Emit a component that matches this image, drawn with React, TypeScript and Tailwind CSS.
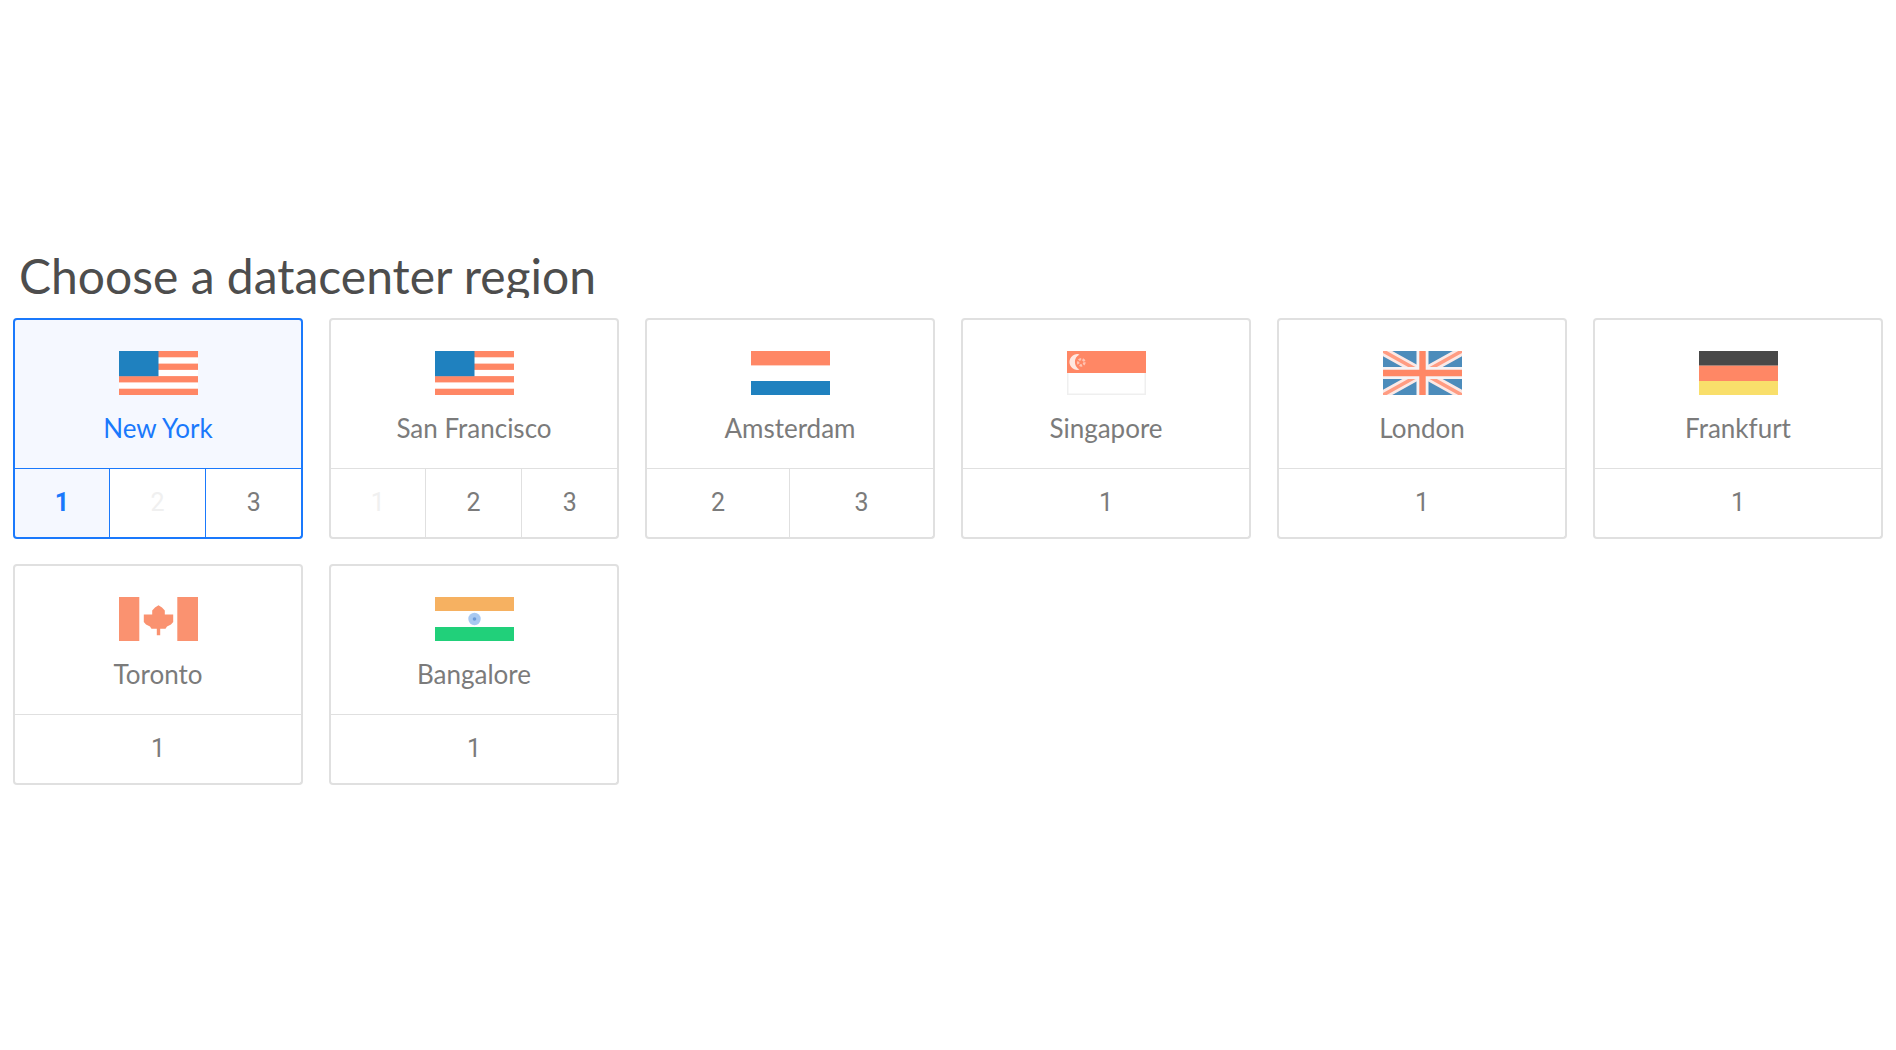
import { useState } from "react";

const CORAL = "#ff8765";
const BLUE = "#1f81bf";

function UsaFlag() {
  return (
    <svg viewBox="0 0 79 44" className="h-11 w-[79px]">
      <rect width="79" height="44" fill="#fff" />
      {[0, 12.6, 25.1, 37.7].map((y) => (
        <rect key={y} y={y} width="79" height="6.3" fill={CORAL} />
      ))}
      <rect width="39.5" height="25.2" fill={BLUE} />
    </svg>
  );
}

function NetherlandsFlag() {
  return (
    <svg viewBox="0 0 79 44" className="h-11 w-[79px]">
      <rect width="79" height="44" fill="#fff" />
      <rect width="79" height="14.4" fill={CORAL} />
      <rect y="30" width="79" height="14" fill={BLUE} />
    </svg>
  );
}

function SingaporeFlag() {
  return (
    <svg viewBox="0 0 79 44" className="h-11 w-[79px]">
      <rect x="0.75" y="0.75" width="77.5" height="42.5" fill="#fff" stroke="#efefef" strokeWidth="1.5" />
      <rect width="79" height="22" fill={CORAL} />
      <path d="M12.5 3.4A7.9 7.9 0 1 0 12.5 18.6A8.6 8.6 0 0 1 12.5 3.4Z" fill="#fff" fillOpacity="0.8" />
      <circle cx="14.3" cy="11.3" r="3.2" fill="none" stroke="#fff" strokeOpacity="0.5" strokeWidth="2.4" strokeDasharray="2.6 1.4" />
    </svg>
  );
}

function UkFlag() {
  return (
    <svg viewBox="0 0 79 44" className="h-11 w-[79px]">
      <rect width="79" height="44" fill="#4c8cbb" />
      <path d="M0 0L79 44M79 0L0 44" stroke="#fbe9e6" strokeWidth="9" />
      <path d="M0 0L79 44M79 0L0 44" stroke="#ff9c82" strokeWidth="3.6" />
      <path d="M39.5 0V44M0 22H79" stroke="#f6f3f5" strokeWidth="12" />
      <path d="M39.5 0V44M0 22H79" stroke={CORAL} strokeWidth="6.4" />
    </svg>
  );
}

function GermanyFlag() {
  return (
    <svg viewBox="0 0 79 44" className="h-11 w-[79px]">
      <rect width="79" height="14.7" fill="#484848" />
      <rect y="14.7" width="79" height="15.3" fill={CORAL} />
      <rect y="30" width="79" height="14" fill="#f9df6b" />
    </svg>
  );
}

function CanadaFlag() {
  return (
    <svg viewBox="0 0 79 44" className="h-11 w-[79px]">
      <rect width="79" height="44" fill="#fff" />
      <rect width="20.3" height="44" fill="#fa9270" />
      <rect x="58.3" width="20.7" height="44" fill="#fa9270" />
      <path
        d="M39.5 8.2L43 10.5L45.8 13.5V17.5H54.2V25L52 27.5L48 29.5L46.5 31.8H41.2V38.2H37.8V31.8H32.5L31 29.5L27 27.5L24.8 25V17.5H33.2V13.5L36 10.5Z"
        fill="#fa9270"
      />
    </svg>
  );
}

function IndiaFlag() {
  return (
    <svg viewBox="0 0 79 44" className="h-11 w-[79px]">
      <rect width="79" height="44" fill="#fff" />
      <rect width="79" height="14" fill="#f6b161" />
      <rect y="30" width="79" height="14" fill="#21d07a" />
      <circle cx="39.5" cy="22" r="6.2" fill="#a9c9f1" />
      <circle cx="39.5" cy="22" r="1.8" fill="#6c9bd8" />
    </svg>
  );
}

const regions = [
  { name: "New York", Flag: UsaFlag, slots: [1, 2, 3], disabled: [2] },
  { name: "San Francisco", Flag: UsaFlag, slots: [1, 2, 3], disabled: [1] },
  { name: "Amsterdam", Flag: NetherlandsFlag, slots: [2, 3], disabled: [] },
  { name: "Singapore", Flag: SingaporeFlag, slots: [1], disabled: [] },
  { name: "London", Flag: UkFlag, slots: [1], disabled: [] },
  { name: "Frankfurt", Flag: GermanyFlag, slots: [1], disabled: [] },
  { name: "Toronto", Flag: CanadaFlag, slots: [1], disabled: [] },
  { name: "Bangalore", Flag: IndiaFlag, slots: [1], disabled: [] },
];

function RegionCard({ region, selected, onSelect }: any) {
  const { name, Flag, slots, disabled } = region;
  const active = selected.name === name;
  const border = active ? "border-[#1a79fc]" : "border-[#e0e0e0]";

  const slotColor = (slot: number) => {
    if (active && selected.slot === slot) {
      return "bg-[#f5f8ff] font-bold text-[#1a79fc]";
    }
    return disabled.includes(slot) ? "text-[#f0f0f0]" : "text-[#7b7b7b]";
  };

  return (
    <div className="flex flex-col">
      <button
        className={`flex h-[151px] flex-col items-center rounded-t border-2 border-b pt-[31px] ${border} ${
          active ? "bg-[#f5f8ff] text-[#1a79fc]" : "text-[#7b7b7b]"
        }`}
        onClick={() =>
          onSelect({ name, slot: slots.find((s: number) => !disabled.includes(s)) })
        }
      >
        <Flag />
        <span className="mt-4 text-[26px] leading-[34px]">{name}</span>
      </button>
      <div className="grid h-[70px] auto-cols-fr grid-flow-col">
        {slots.map((slot: number) => (
          <button
            key={slot}
            disabled={disabled.includes(slot)}
            className={`border-r border-b-2 font-[Roboto,sans-serif] text-[25px] leading-8 first:rounded-bl first:border-l-2 last:rounded-br last:border-r-2 ${border} ${slotColor(slot)}`}
            onClick={() => onSelect({ name, slot })}
          >
            {slot}
          </button>
        ))}
      </div>
    </div>
  );
}

export default function App() {
  const [selected, setSelected] = useState<any>({ name: "New York", slot: 1 });

  return (
    <main className="min-h-screen bg-white px-[13px] pt-[250px] font-[Lato,sans-serif]">
      <h1 className="h-12 overflow-hidden pl-1.5 text-5xl leading-[52px] text-[#4d4d4d]">
        Choose a datacenter region
      </h1>
      <div className="mt-5 grid grid-cols-6 gap-x-[26px] gap-y-[25px]">
        {regions.map((region) => (
          <RegionCard
            key={region.name}
            region={region}
            selected={selected}
            onSelect={setSelected}
          />
        ))}
      </div>
    </main>
  );
}
